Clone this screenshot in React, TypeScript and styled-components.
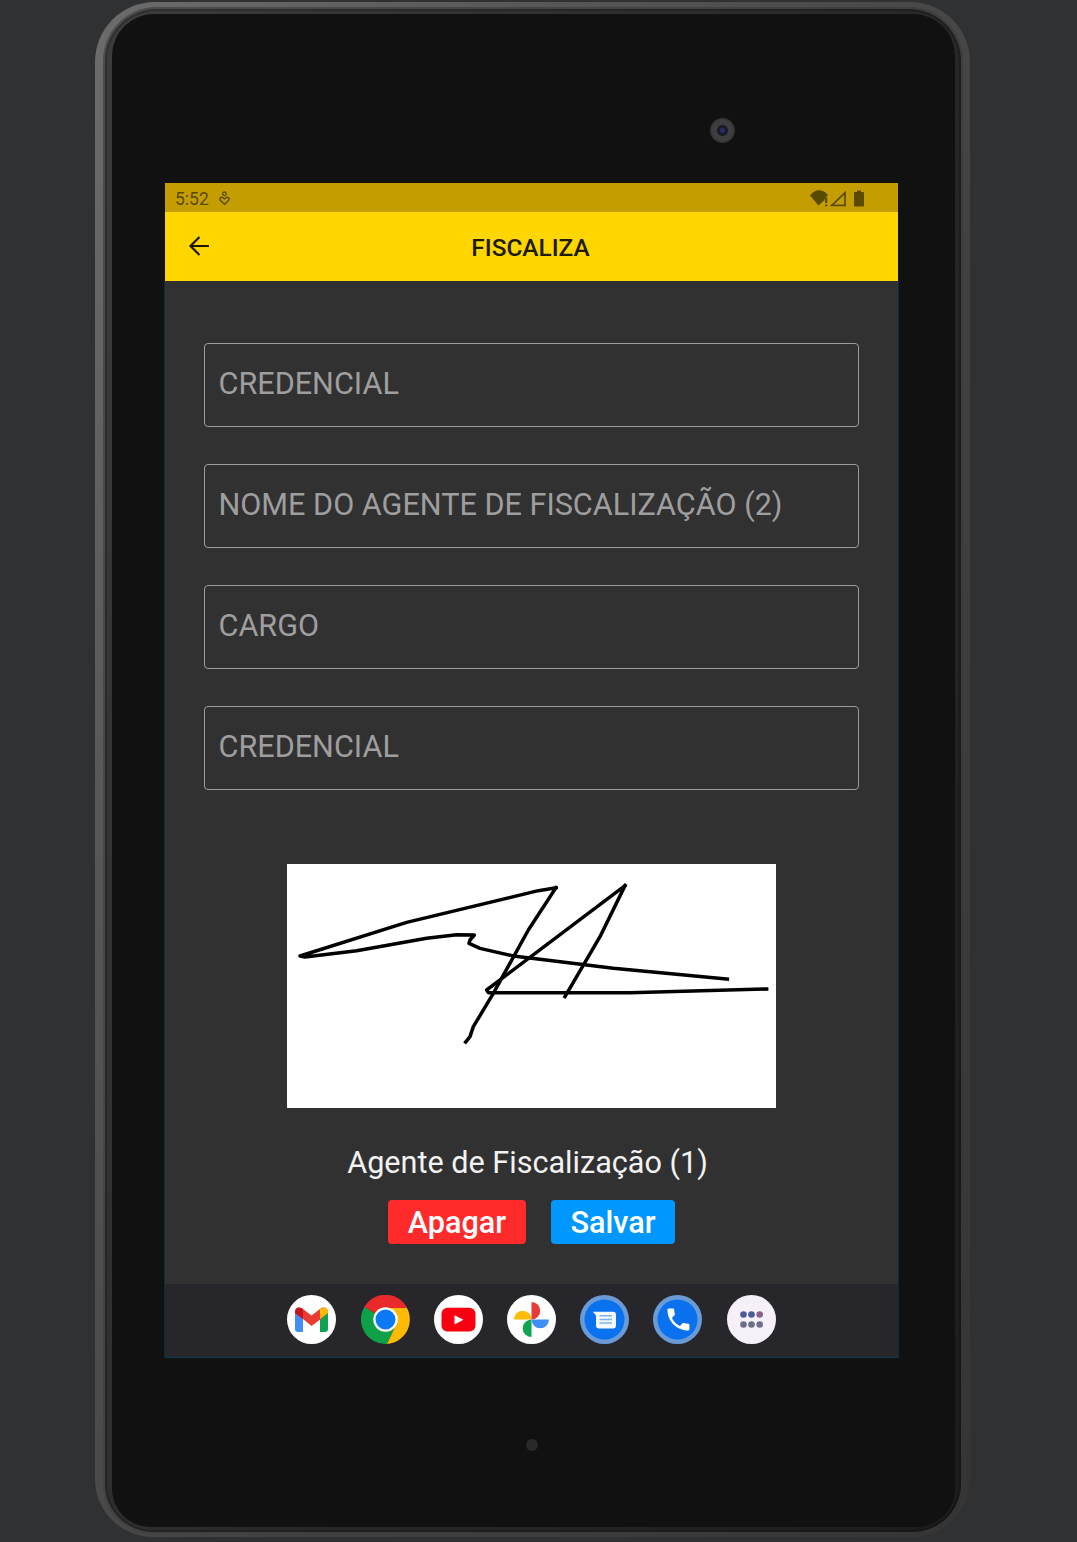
import React from "react";
import styled, { createGlobalStyle } from "styled-components";

const Global = createGlobalStyle`
  html, body { margin: 0; padding: 0; background: #2f3133; }
  body { font-family: Roboto, "Liberation Sans", sans-serif; overflow: hidden; }
`;

const Page = styled.div`
  width: 1077px;
  height: 1542px;
  padding: 2px 0 0 95px;
  box-sizing: border-box;
  background: #2f3133;
`;

const Shell = styled.div`
  width: 875px;
  height: 1535px;
  box-sizing: border-box;
  padding: 5px 7px 3px 8px;
  border-radius: 60px 60px 58px 58px;
  background: linear-gradient(118deg, #6c6c6d 0%, #565657 28%, #414142 60%, #353536 100%);
`;

const Rim = styled.div`
  height: 100%;
  box-sizing: border-box;
  padding: 7px 8px 7px 9px;
  border-radius: 54px 54px 50px 50px;
  background: linear-gradient(110deg, #3c3c3d 0%, #2a2a2b 50%, #1c1c1d 100%);
  box-shadow: inset 0 0 0 2px rgba(255, 255, 255, 0.14), inset 0 0 0 4px rgba(0, 0, 0, 0.2);
`;

const Face = styled.div`
  height: 100%;
  box-sizing: border-box;
  padding: 0 57px 0 53px;
  display: flex;
  flex-direction: column;
  border-radius: 42px 42px 38px 38px;
  background: #111112;
`;

const TopBezel = styled.div`
  height: 169px;
  flex: none;
  display: flex;
  align-items: flex-start;
  justify-content: flex-end;
  padding: 104px 163px 0 0;
  box-sizing: border-box;
`;

const Camera = styled.div`
  width: 25px;
  height: 25px;
  border-radius: 50%;
  background: radial-gradient(circle, #2a2c6a 0 2px, #1a1a24 3px 5px, #3e3e40 6px 10px, #333 12px);
`;

const Screen = styled.div`
  height: 1175px;
  flex: none;
  display: flex;
  flex-direction: column;
`;

const BottomBezel = styled.div`
  flex: 1;
  display: flex;
  justify-content: center;
  padding: 81px 0 0 1px;
  box-sizing: border-box;
`;

const HomeDot = styled.div`
  width: 12px;
  height: 12px;
  border-radius: 50%;
  background: #2a2a2b;
`;

const StatusBar = styled.div`
  height: 29px;
  flex: none;
  background: #c49e00;
  color: #5a4a00;
  display: flex;
  align-items: center;
  padding: 2px 34px 0 10px;
  box-sizing: border-box;
  font-size: 17.5px;
`;

const StatusTime = styled.span`
  margin-right: 10px;
`;

const StatusSpacer = styled.div`
  flex: 1;
`;

const AppBar = styled.header`
  height: 69px;
  flex: none;
  position: relative;
  background: #ffd600;
  display: flex;
  align-items: center;
  justify-content: center;
  padding: 1px 2px 0 0;
  box-sizing: border-box;
`;

const BackIcon = styled.svg`
  position: absolute;
  left: 23px;
  top: 23px;
`;

const Title = styled.h1`
  margin: 0;
  font-size: 24.4px;
  font-weight: 500;
  color: #1d1a00;
  letter-spacing: 0;
`;

const Lower = styled.div`
  flex: 1;
  display: flex;
  flex-direction: column;
  box-shadow: -1px 0 0 #0c2c3a, 1px 0 0 #0c2c3a;
`;

const Content = styled.main`
  flex: 1;
  background: #313131;
  padding: 62px 39px 0;
  display: flex;
  flex-direction: column;
  align-items: center;
`;

const Fields = styled.div`
  width: 100%;
  display: flex;
  flex-direction: column;
  gap: 37px;
`;

const Field = styled.div`
  height: 84px;
  box-sizing: border-box;
  border: 1px solid #9c9c9c;
  border-radius: 4px;
  padding: 0 14px 4px 13.5px;
  display: flex;
  align-items: center;
  color: #9e9e9e;
  font-size: 30.6px;
`;

const SignaturePad = styled.div`
  width: 489px;
  height: 244px;
  margin-top: 74px;
  background: #fff;
  flex: none;
`;

const SignatureLabel = styled.div`
  margin: 36px 8px 0 0;
  font-size: 30.6px;
  line-height: 38px;
  color: #f2f2f2;
`;

const Actions = styled.div`
  margin-top: 18px;
  display: flex;
  gap: 25px;
`;

const ActionButton = styled.button<{ $bg: string; $w: number }>`
  width: ${(p) => p.$w}px;
  height: 44px;
  border: 0;
  border-radius: 4px;
  padding: 0;
  background: ${(p) => p.$bg};
  color: #fff;
  font-family: inherit;
  font-size: 30.6px;
  font-weight: 500;
`;

const NavBar = styled.nav`
  height: 74px;
  flex: none;
  background: #27272b;
  display: flex;
  align-items: center;
  justify-content: center;
  gap: 24.2px;
  padding-bottom: 2px;
  box-sizing: border-box;
  border-bottom: 1px solid #0c3a4c;
`;

const AppIcon = styled.svg`
  width: 49px;
  height: 49px;
  flex: none;
`;

const Gmail = () => (
  <AppIcon viewBox="0 0 49 49">
    <circle cx="24.5" cy="24.5" r="24.5" fill="#fff" />
    <path d="M9 17h7v20h-5a3 3 0 0 1-3-3V18z" fill="#3f8ff7" />
    <path d="M33 17h7l1 1v16a3 3 0 0 1-3 3h-5z" fill="#12a150" />
    <path d="M8 18l0-1c0-4 4-6 8-3l8.500 6.500L33 14c4-3 8-1 8 3v1l-7 6-9.500 7L16 24z" fill="#ea3b35" />
    <path d="M8 18v-1c0-3 2-4.500 3.500-4.500l4.500 1.500v10z" fill="#c5161d" />
    <path d="M41 18v-1c0-3-2-4.500-3.500-4.500L33 14v10z" fill="#fbbc05" />
  </AppIcon>
);

const Chrome = () => (
  <AppIcon viewBox="0 0 49 49">
    <path d="M24.500 24.500L3.300 12A24.500 24.500 0 0 1 45.700 12L46 13H24.500z" fill="#ea2a2a" />
    <path d="M24.500 24.500L3.300 12A24.500 24.500 0 0 0 26 48.900L35 30z" fill="#0ea14a" />
    <path d="M24.500 24.500V13H46A24.500 24.500 0 0 1 26 48.900L35 30z" fill="#fdbb05" />
    <circle cx="24.500" cy="24.500" r="12.200" fill="#fff" />
    <circle cx="24.500" cy="24.500" r="10" fill="#0b79f5" />
  </AppIcon>
);

const YouTube = () => (
  <AppIcon viewBox="0 0 49 49">
    <circle cx="24.500" cy="24.500" r="24.500" fill="#fff" />
    <rect x="7.500" y="12.800" width="34" height="23.700" rx="6" fill="#f8000f" />
    <path d="M20.500 20.200l9 4.600-9 4.600z" fill="#fff" />
  </AppIcon>
);

const Photos = () => (
  <AppIcon viewBox="0 0 49 49">
    <circle cx="24.500" cy="24.500" r="24.500" fill="#fff" />
    <path d="M7 24.500A8.750 8.750 0 0 1 24.500 24.500Z" fill="#fdbb05" />
    <path d="M24.500 7A8.750 8.750 0 0 1 24.500 24.500Z" fill="#ea3a35" />
    <path d="M42 24.500A8.750 8.750 0 0 1 24.500 24.500Z" fill="#3f8ef5" />
    <path d="M24.500 42A8.750 8.750 0 0 1 24.500 24.500Z" fill="#0ea552" />
  </AppIcon>
);

const Messages = () => (
  <AppIcon viewBox="0 0 49 49">
    <circle cx="24.500" cy="24.500" r="24.500" fill="#6b9bd6" />
    <circle cx="24.500" cy="24.500" r="20" fill="#0a72ee" />
    <path d="M12.800 16.800H33a3 3 0 0 1 3 3v10.700a3 3 0 0 1-3 3H19a3 3 0 0 1-3-3V20.500z" fill="#f4f8ff" />
    <path d="M19.500 20.800h12.500M19.500 24.400h12.500M19.500 28h12.500" stroke="#7db2f5" strokeWidth="1.500" />
  </AppIcon>
);

const Phone = () => (
  <AppIcon viewBox="0 0 49 49">
    <circle cx="24.500" cy="24.500" r="24.500" fill="#6b9bd6" />
    <circle cx="24.500" cy="24.500" r="20" fill="#0a72ee" />
    <path
      transform="translate(10.800 9.800) scale(1.22)"
      fill="#fff"
      d="M6.620 10.790c1.440 2.830 3.760 5.140 6.590 6.590l2.200-2.200c.27-.27.67-.36 1.020-.24 1.120.37 2.330.57 3.570.57.55 0 1 .45 1 1V20c0 .55-.45 1-1 1-9.390 0-17-7.610-17-17 0-.55.45-1 1-1h3.500c.55 0 1 .45 1 1 0 1.250.2 2.450.57 3.570.11.35.03.74-.25 1.020l-2.200 2.200z"
    />
  </AppIcon>
);

const Apps = () => (
  <AppIcon viewBox="0 0 49 49">
    <circle cx="24.500" cy="24.500" r="24.500" fill="#f6f1f8" />
    <circle cx="16.500" cy="19.500" r="3.300" fill="#4b5a98" />
    <circle cx="24.500" cy="19.500" r="3.300" fill="#4b5a98" />
    <circle cx="32.700" cy="19.500" r="3.300" fill="#8a5f8c" />
    <circle cx="16.500" cy="29.500" r="3.300" fill="#6d7088" />
    <circle cx="24.500" cy="29.500" r="3.300" fill="#6d7088" />
    <circle cx="32.700" cy="29.500" r="3.300" fill="#6d7088" />
  </AppIcon>
);

const Signature = () => (
  <svg width="489" height="244" viewBox="21 12 1467 732" style={{ display: "block" }}>
    <g fill="none" stroke="#000" strokeWidth="10.500" strokeLinejoin="round" strokeLinecap="square">
      <path d="M828 83L775 92L380 187L60 288L75 291L230 272L440 235L530 224L583 225L570 240L567 250L600 265L700 288L1000 325L1342 357" />
      <path d="M828 83L745 210L640 400L580 500L570 530L557 546" />
      <path d="M1035 77L620 390L625 398L1050 398L1460 387" />
      <path d="M1035 77L960 230L855 410" />
    </g>
  </svg>
);

export default function App() {
  return (
    <Page>
      <Global />
      <Shell>
        <Rim>
          <Face>
            <TopBezel>
              <Camera />
            </TopBezel>
            <Screen>
              <StatusBar>
                <StatusTime>5:52</StatusTime>
                <svg width="11" height="15" viewBox="0 0 11 15">
                  <circle cx="5.500" cy="2.800" r="1.800" fill="none" stroke="#5a4a00" strokeWidth="1.300" />
                  <path d="M5.500 13.300L1.300 9.200C0 7.500 1.800 5.800 3.500 6.400L5.500 7.800L7.500 6.400C9.200 5.800 11 7.500 9.700 9.200Z" fill="none" stroke="#5a4a00" strokeWidth="1.400" />
                </svg>
                <StatusSpacer />
                <svg width="54" height="18" viewBox="0 0 54 18">
                  <path d="M0 5.500C5 -1.500 13 -1.500 18 5L14.500 9V10L8.500 15.500Z" fill="#5a4a00" />
                  <path d="M15 7.500H17.300V13H15zM15 14.400H17.300V16.200H15z" fill="#5a4a00" />
                  <path d="M21.800 15.400L35 2.800V15.400Z" fill="none" stroke="#5a4a00" strokeWidth="1.700" />
                  <path d="M45 2H47V.5H51V2H53A1 1 0 0 1 54 3V15.500A1 1 0 0 1 53 16.500H45A1 1 0 0 1 44 15.500V3A1 1 0 0 1 45 2Z" fill="#5a4a00" />
                </svg>
              </StatusBar>
              <AppBar>
                <BackIcon width="22" height="22" viewBox="0 0 22 22">
                  <path d="M21 11H2.500M11.500 2L2.500 11L11.500 20" fill="none" stroke="#1d1a00" strokeWidth="2.200" />
                </BackIcon>
                <Title>FISCALIZA</Title>
              </AppBar>
              <Lower>
                <Content>
                  <Fields>
                    <Field>CREDENCIAL</Field>
                    <Field>NOME DO AGENTE DE FISCALIZAÇÃO (2)</Field>
                    <Field>CARGO</Field>
                    <Field>CREDENCIAL</Field>
                  </Fields>
                  <SignaturePad>
                    <Signature />
                  </SignaturePad>
                  <SignatureLabel>Agente de Fiscalização (1)</SignatureLabel>
                  <Actions>
                    <ActionButton $bg="#ff2a2a" $w={138}>Apagar</ActionButton>
                    <ActionButton $bg="#0098ff" $w={124}>Salvar</ActionButton>
                  </Actions>
                </Content>
                <NavBar>
                  <Gmail />
                  <Chrome />
                  <YouTube />
                  <Photos />
                  <Messages />
                  <Phone />
                  <Apps />
                </NavBar>
              </Lower>
            </Screen>
            <BottomBezel>
              <HomeDot />
            </BottomBezel>
          </Face>
        </Rim>
      </Shell>
    </Page>
  );
}
